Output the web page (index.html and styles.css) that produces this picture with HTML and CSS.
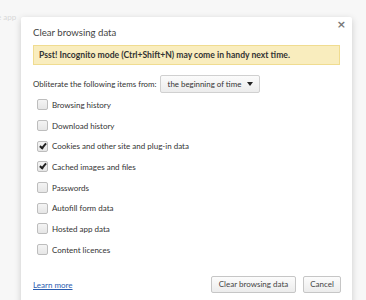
FILE: index.html
```html
<!DOCTYPE html>
<html>
<head>
<meta charset="utf-8">
<link rel="stylesheet" href="styles.css">
</head>
<body>
<div class="page">
  <span class="bg-text">e app</span>
  <div class="dialog">
    <div class="close">&#215;</div>
    <div class="title">Clear browsing data</div>
    <div class="banner">Psst! Incognito mode (Ctrl+Shift+N) may come in handy next time.</div>
    <div class="from-row">
      <span>Obliterate the following items from:</span>
      <span class="select">the beginning of time <span class="arrow"></span></span>
    </div>
    <ul class="items">
      <li><span class="cb"></span>Browsing history</li>
      <li><span class="cb"></span>Download history</li>
      <li><span class="cb checked"></span>Cookies and other site and plug-in data</li>
      <li><span class="cb checked"></span>Cached images and files</li>
      <li><span class="cb"></span>Passwords</li>
      <li><span class="cb"></span>Autofill form data</li>
      <li><span class="cb"></span>Hosted app data</li>
      <li><span class="cb"></span>Content licences</li>
    </ul>
    <div class="footer">
      <a class="learn" href="#">Learn more</a>
      <div class="buttons">
        <span class="btn btn-clear">Clear browsing data</span>
        <span class="btn btn-cancel">Cancel</span>
      </div>
    </div>
  </div>
</div>
</body>
</html>
```
FILE: styles.css
```css
html, body {
  margin: 0;
  padding: 0;
  background: #f7f7f7;
  overflow: hidden;
}
body {
  width: 366px;
  height: 300px;
  font-family: Lato, "DejaVu Sans", sans-serif;
  color: #333;
}
.page {
  position: relative;
  height: 300px;
  padding: 17px 0 0 21px;
  box-sizing: border-box;
}
.bg-text {
  position: absolute;
  left: -3px;
  top: 12px;
  font-size: 8px;
  color: #d8d8d8;
}
.dialog {
  position: relative;
  width: 331px;
  height: 300px;
  background: #fff;
  border-radius: 2px;
  box-shadow: 0 2px 7px rgba(0,0,0,0.18);
  box-sizing: border-box;
  padding: 9px 12px 0 12px;
}
.close {
  position: absolute;
  right: 6px;
  top: 1px;
  font-size: 11px;
  font-weight: bold;
  color: #777;
  font-family: "DejaVu Sans", sans-serif;
}
.title {
  font-size: 9.6px;
  color: #444;
  line-height: 14px;
}
.banner {
  margin-top: 5px;
  height: 20px;
  line-height: 18px;
  background: #f9edbe;
  border: 1px solid #f0dc90;
  box-sizing: border-box;
  width: 307px;
  padding-left: 5px;
  font-size: 8.6px;
  font-weight: bold;
  color: #333;
}
.from-row {
  margin-top: 10px;
  height: 18px;
  display: flex;
  align-items: center;
  gap: 3px;
  font-size: 7.9px;
  color: #333;
}
.select {
  display: inline-flex;
  align-items: center;
  justify-content: space-between;
  width: 100px;
  height: 18px;
  padding: 0 6px 0 7px;
  border: 1px solid #d0d0d0;
  border-radius: 2px;
  background: linear-gradient(#fbfbfb, #ececec);
  box-sizing: border-box;
}
.arrow {
  width: 0;
  height: 0;
  border-left: 3px solid transparent;
  border-right: 3px solid transparent;
  border-top: 4px solid #222;
}
.items {
  list-style: none;
  margin: 1.5px 0 0 0;
  padding: 0 0 0 4px;
}
.items li {
  display: flex;
  align-items: center;
  height: 20.7px;
  font-size: 8px;
  color: #333;
}
.cb {
  width: 9px;
  height: 9px;
  border: 1px solid #bdbdbd;
  border-radius: 2px;
  background: linear-gradient(#f4f4f4, #e6e6e6);
  margin-right: 4px;
  position: relative;
}
.cb.checked::after {
  content: "";
  position: absolute;
  left: 3px;
  top: 0px;
  width: 2px;
  height: 5px;
  border-right: 2px solid #222;
  border-bottom: 2px solid #222;
  transform: rotate(40deg);
}
.footer {
  margin-top: 15.5px;
  display: flex;
  align-items: center;
  justify-content: space-between;
  width: 308px;
}
.learn {
  font-size: 8px;
  color: #2a5db0;
  text-decoration: underline;
  margin-top: 1px;
}
.buttons {
  display: flex;
  gap: 7px;
}
.btn {
  height: 17px;
  line-height: 15px;
  text-align: center;
  font-size: 8px;
  color: #444;
  border: 1px solid #c6c6c6;
  border-radius: 2px;
  background: linear-gradient(#fcfcfc, #ececec);
  box-sizing: border-box;
}
.btn-clear { width: 85px; }
.btn-cancel { width: 38px; }
```
